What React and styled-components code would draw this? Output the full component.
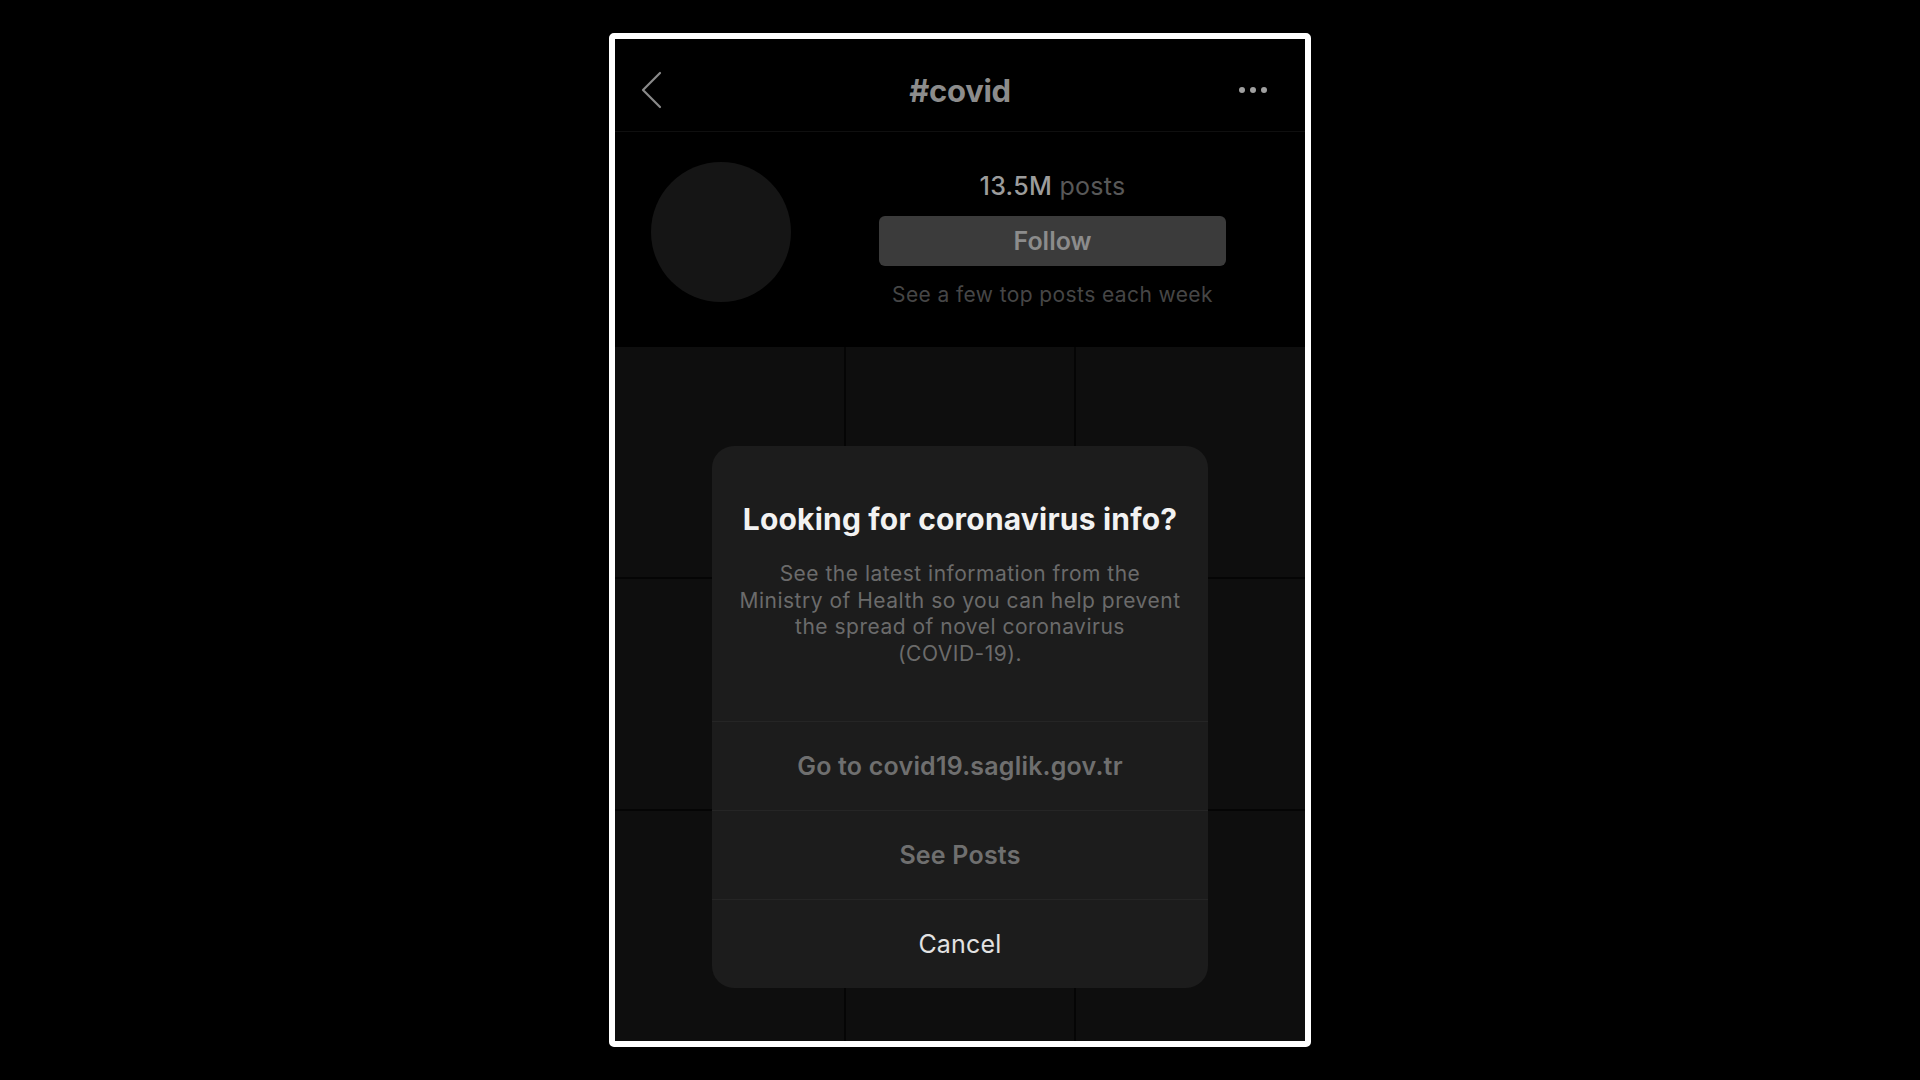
import React from "react";
import styled, {createGlobalStyle} from "styled-components";

const GlobalStyle = createGlobalStyle`
  html, body {
    margin: 0;
    padding: 0;
    background: #000;
    font-family: Inter, "Noto Sans", "Liberation Sans", sans-serif;
  }
`;

const cells = Array.from({length: 9}, (_, i) => i);

function App() {
  return (
    <>
      <GlobalStyle />
      <Page>
        <Phone>
          <Header>
            <BackButton>
              <svg width="22" height="38" viewBox="0 0 22 38">
                <polyline points="19,2 2,19 19,36" fill="none" stroke="#8a8a8a" strokeWidth="2.2" strokeLinecap="round" strokeLinejoin="round" />
              </svg>
            </BackButton>
            <Title>#covid</Title>
            <MoreButton>
              <svg width="30" height="8" viewBox="0 0 30 8">
                <circle cx="4" cy="4" r="3" fill="#a0a0a0" />
                <circle cx="15" cy="4" r="3" fill="#a0a0a0" />
                <circle cx="26" cy="4" r="3" fill="#a0a0a0" />
              </svg>
            </MoreButton>
          </Header>

          <Profile>
            <Avatar />
            <Stats>
              <PostCount>
                <strong>13.5M</strong> posts
              </PostCount>
              <FollowButton>Follow</FollowButton>
              <Hint>See a few top posts each week</Hint>
            </Stats>
          </Profile>

          <Grid>
            {cells.map((i) => (
              <Cell key={i} />
            ))}
          </Grid>

          <Overlay>
            <Dialog>
              <DialogBody>
                <DialogTitle>Looking for coronavirus info?</DialogTitle>
                <DialogText>
                  See the latest information from the Ministry of Health so you can help prevent the spread of novel
                  coronavirus <NoWrap>(COVID-19).</NoWrap>
                </DialogText>
              </DialogBody>
              <DialogAction $muted>Go to covid19.saglik.gov.tr</DialogAction>
              <DialogAction $muted>See Posts</DialogAction>
              <DialogAction>Cancel</DialogAction>
            </Dialog>
          </Overlay>
        </Phone>
      </Page>
    </>
  );
}
export default App;

const Page = styled.div`
  width: 100vw;
  height: 100vh;
  display: flex;
  align-items: center;
  justify-content: center;
`;

const Phone = styled.div`
  position: relative;
  width: 690px;
  height: 1002px;
  border: 6px solid #fff;
  border-radius: 5px;
  background: #000;
  display: flex;
  flex-direction: column;
  overflow: hidden;
`;

const Header = styled.div`
  height: 93px;
  border-bottom: 1px solid #0f0f0f;
  display: flex;
  align-items: center;
  justify-content: space-between;
  padding: 10px 37px 0 26px;
  box-sizing: border-box;
  flex-shrink: 0;
`;

const BackButton = styled.div`
  width: 51px;
  display: flex;
  align-items: center;
  svg {
    display: block;
  }
`;

const MoreButton = styled.div`
  width: 40px;
  display: flex;
  justify-content: flex-end;
  svg {
    display: block;
  }
`;

const Title = styled.div`
  font-size: 31px;
  font-weight: 700;
  color: #8c8c8c;
  letter-spacing: -0.3px;
`;

const Profile = styled.div`
  height: 215px;
  display: flex;
  align-items: flex-start;
  padding: 30px 79px 0 36px;
  box-sizing: border-box;
  flex-shrink: 0;
`;

const Avatar = styled.div`
  width: 140px;
  height: 140px;
  border-radius: 50%;
  background: #151515;
  flex-shrink: 0;
`;

const Stats = styled.div`
  flex: 1;
  margin-left: 88px;
  display: flex;
  flex-direction: column;
  align-items: stretch;
  text-align: center;
  padding-top: 9px;
`;

const PostCount = styled.div`
  font-size: 25px;
  line-height: 30px;
  letter-spacing: 0.3px;
  color: #585858;
  strong {
    font-weight: 500;
    color: #9c9c9c;
  }
`;

const FollowButton = styled.div`
  margin-top: 15px;
  height: 50px;
  border-radius: 6px;
  background: #3b3b3b;
  color: #8c8c8c;
  font-size: 25px;
  font-weight: 600;
  display: flex;
  align-items: center;
  justify-content: center;
`;

const Hint = styled.div`
  margin-top: 15px;
  font-size: 21px;
  line-height: 28px;
  letter-spacing: 0.4px;
  color: #464646;
`;

const Grid = styled.div`
  flex: 1;
  display: grid;
  grid-template-columns: repeat(3, 1fr);
  grid-template-rows: repeat(3, 1fr);
  gap: 2px;
  background: #050505;
`;

const Cell = styled.div`
  background: #0e0e0e;
`;

const Overlay = styled.div`
  position: absolute;
  inset: 0;
  display: flex;
  justify-content: center;
  align-items: flex-start;
  padding-top: 407px;
`;

const Dialog = styled.div`
  width: 496px;
  border-radius: 22px;
  background: #1c1c1c;
  overflow: hidden;
  display: flex;
  flex-direction: column;
`;

const DialogBody = styled.div`
  padding: 55px 20px 54px;
  text-align: center;
`;

const DialogTitle = styled.div`
  font-size: 30px;
  line-height: 36px;
  font-weight: 700;
  color: #f2f2f2;
  letter-spacing: 0.2px;
`;

const DialogText = styled.div`
  margin-top: 24px;
  font-size: 21px;
  line-height: 26.5px;
  letter-spacing: 0.5px;
  color: #6b6b6b;
  padding: 0 4px;
`;

const NoWrap = styled.span`
  white-space: nowrap;
`;

const DialogAction = styled.div`
  height: 88px;
  border-top: 1px solid #252525;
  display: flex;
  align-items: center;
  justify-content: center;
  font-size: 25px;
  letter-spacing: 0.2px;
  font-weight: ${(p) => (p.$muted ? 600 : 400)};
  color: ${(p) => (p.$muted ? "#6f6f6f" : "#e2e2e2")};
`;
